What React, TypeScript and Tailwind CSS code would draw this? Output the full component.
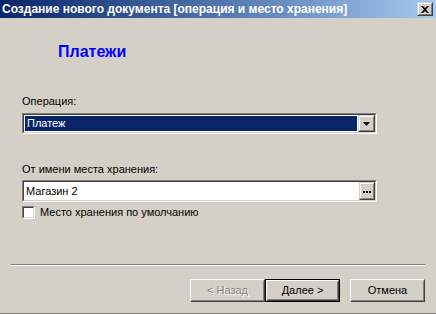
import React from 'react';

const font = { fontFamily: '"Liberation Sans", Arial, sans-serif' };

// sunken 3D frame used by the combo and the text field
const Sunken = ({ children, className = '' }: { children: React.ReactNode; className?: string }) => (
  <div className={`border border-t-[#808080] border-l-[#808080] border-b-white border-r-white ${className}`}>
    <div className="h-full border border-t-[#404040] border-l-[#404040] border-b-[#d4d0c8] border-r-[#d4d0c8] bg-white flex">
      {children}
    </div>
  </div>
);

const Raised = ({ children, className = '' }: { children: React.ReactNode; className?: string }) => (
  <div className={`border border-t-[#d4d0c8] border-l-[#d4d0c8] border-b-[#404040] border-r-[#404040] ${className}`}>
    <div className="h-full border border-t-white border-l-white border-b-[#808080] border-r-[#808080] bg-[#d4d0c8] flex items-center justify-center">
      {children}
    </div>
  </div>
);

const PushButton = ({ label, disabled, isDefault }: { label: string; disabled?: boolean; isDefault?: boolean }) => (
  <div className={`w-[75px] h-[23px] ${isDefault ? 'border border-black' : ''}`}>
    <div className="h-full border border-t-white border-l-white border-b-[#404040] border-r-[#404040]">
      <div className="h-full border border-t-[#d4d0c8] border-l-[#d4d0c8] border-b-[#808080] border-r-[#808080] flex items-center justify-center text-[11px]">
        <span className={disabled ? 'text-[#808080] [text-shadow:1px_1px_0_#fff]' : 'text-black'}>{label}</span>
      </div>
    </div>
  </div>
);

export default function App() {
  return (
    <div className="w-[436px] h-[314px] bg-[#d4d0c8] flex flex-col border-b border-[#808080]" style={font}>
      {/* Title bar */}
      <div className="h-[18px] flex items-center justify-between pl-[2px] pr-[3px] bg-gradient-to-r from-[#0a246a] to-[#a6caf0]">
        <span className="text-white font-bold text-[12px] leading-none whitespace-nowrap">
          Создание нового документа [операция и место хранения]
        </span>
        <Raised className="w-[16px] h-[14px]">
          <svg width="8" height="7" viewBox="0 0 8 7">
            <path d="M0 0h2l2 2 2-2h2L5 3.5 8 7H6L4 5 2 7H0l3-3.5z" fill="black" />
          </svg>
        </Raised>
      </div>

      <div className="flex-1 flex flex-col pl-[22px] pt-[25px]">
        <div className="pl-[36px] text-[16px] leading-[18px] font-bold text-[#0000ff]">Платежи</div>

        <div className="mt-[34px] text-[11px] leading-[13px] text-black">Операция:</div>
        <Sunken className="mt-[5px] w-[355px] h-[21px]">
          <div className="flex-1 m-[1px] bg-[#0a246a] text-white text-[11px] flex items-center pl-[2px]">Платеж</div>
          <Raised className="w-[17px]">
            <svg width="7" height="4" viewBox="0 0 7 4">
              <path d="M0 0h7L3.5 4z" fill="black" />
            </svg>
          </Raised>
        </Sunken>

        <div className="mt-[29px] text-[11px] leading-[13px] text-black">От имени места хранения:</div>
        <Sunken className="mt-[4px] w-[355px] h-[22px]">
          <div className="flex-1 text-black text-[11px] flex items-center pl-[2px]">Магазин 2</div>
          <Raised className="w-[16px]">
            <span className="flex gap-[1px] mt-[1px]">
              <i className="w-[2px] h-[2px] bg-black" />
              <i className="w-[2px] h-[2px] bg-black" />
              <i className="w-[2px] h-[2px] bg-black" />
            </span>
          </Raised>
        </Sunken>

        <div className="mt-[4px] flex items-center gap-[5px]">
          <Sunken className="w-[13px] h-[13px]">
            <span />
          </Sunken>
          <span className="text-[11px] leading-[13px] text-black">Место хранения по умолчанию</span>
        </div>
      </div>

      {/* separator */}
      <div className="mx-[11px] border-t border-t-[#808080] border-b border-b-white" />

      <div className="h-[47px] flex justify-end items-start pt-[13px] pr-[11px]">
        <div className="flex">
          <PushButton label="< Назад" disabled />
          <PushButton label="Далее >" isDefault />
          <div className="w-[10px]" />
          <PushButton label="Отмена" />
        </div>
      </div>
    </div>
  );
}
